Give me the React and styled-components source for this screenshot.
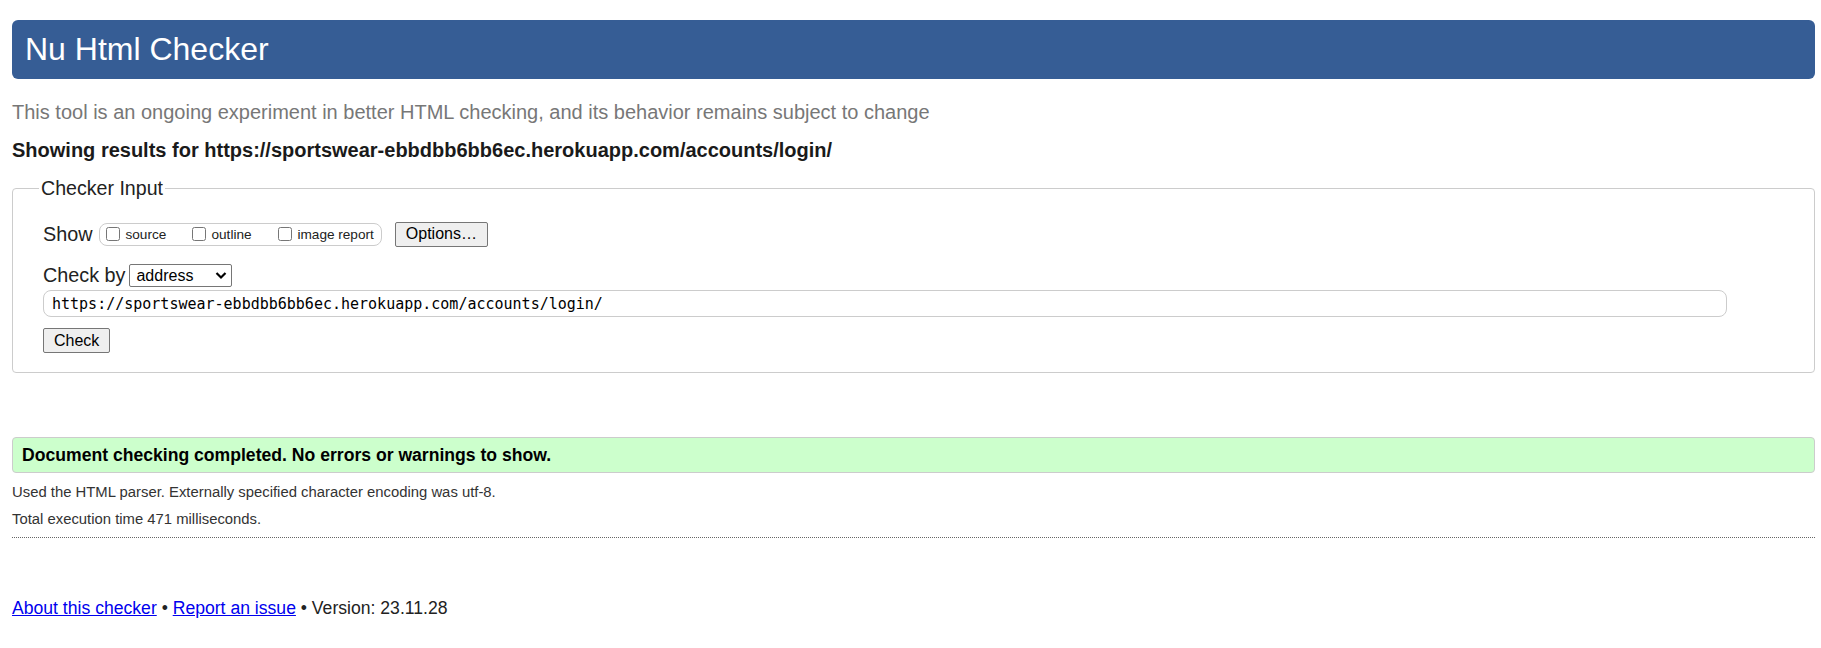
import React from 'react';
import styled, { createGlobalStyle } from 'styled-components';

const GlobalStyle = createGlobalStyle`
  html, body {
    margin: 0;
    padding: 0;
    background: #ffffff;
  }
  body {
    font-family: "Liberation Sans", Arial, sans-serif;
    font-size: 17.6px;
    color: #222222;
  }
`;

const Page = styled.div`
  padding: 0 6px 0 12px;
`;

const Header = styled.h1`
  margin: 20px 0 0 0;
  height: 59px;
  padding: 0 13px;
  display: flex;
  align-items: center;
  background: #365d95;
  color: #ffffff;
  font-size: 32px;
  font-weight: normal;
  border-radius: 6px;
`;

const Intro = styled.p`
  margin: 22px 0 0 0;
  font-size: 20px;
  line-height: 23px;
  color: #777777;
`;

const ResultsFor = styled.p`
  margin: 15px 0 0 0;
  font-size: 20px;
  line-height: 23px;
  font-weight: bold;
  color: #1a1a1a;
`;

const Fieldset = styled.fieldset`
  margin: 15px 0 0 0;
  padding: 23px 30px 19px 30px;
  border: 1px solid #cccccc;
  border-radius: 4px;
  min-width: 0;
`;

const Legend = styled.legend`
  padding: 0 2px;
  margin-left: -4px;
  font-size: 19.6px;
  line-height: 22px;
  color: #222222;
`;

const Row = styled.div`
  display: flex;
  align-items: center;
  height: ${p => p.$h}px;
  margin-top: ${p => p.$mt || 0}px;
`;

const RowLabel = styled.span`
  font-size: 19.8px;
  color: #222222;
  margin-right: ${p => p.$gap}px;
`;

const CheckGroup = styled.span`
  display: inline-flex;
  align-items: center;
  height: 21px;
  padding: 0 7px 0 4px;
  border: 1px solid #cccccc;
  border-radius: 8px;
`;

const CheckItem = styled.label`
  display: inline-flex;
  align-items: center;
  min-width: ${p => p.$w}px;
  font-size: 13.6px;
  color: #222222;

  input {
    margin: 0 5px 0 2px;
    width: 14px;
    height: 14px;
  }
`;

const Button = styled.button`
  height: ${p => p.$h}px;
  padding: 0 ${p => p.$px}px;
  margin-left: ${p => p.$ml || 0}px;
  font-family: "Liberation Sans", Arial, sans-serif;
  font-size: 16px;
  color: #000000;
  background: #efefef;
  border: 1px solid #767676;
  border-radius: 2px;
`;

const SelectBox = styled.span`
  position: relative;
  display: inline-flex;
  align-items: center;
  width: 103px;
  height: 23px;
  box-sizing: border-box;
  border: 1px solid #767676;
  border-radius: 2px;
  padding-left: 6px;
  font-size: 16px;
  color: #000000;
  background: #ffffff;

  svg {
    position: absolute;
    right: 4px;
    top: 6px;
  }
`;

const UrlInput = styled.input`
  display: block;
  box-sizing: border-box;
  width: 1684px;
  height: 27px;
  margin-top: 3px;
  padding: 0 8px;
  border: 1px solid #cccccc;
  border-radius: 8px;
  font-family: "DejaVu Sans Mono", "Liberation Mono", monospace;
  font-size: 15px;
  color: #000000;
  outline: none;
`;

const SubmitRow = styled.div`
  margin-top: 11px;
`;

const Success = styled.div`
  margin-top: 64px;
  height: 34px;
  padding: 0 9px;
  display: flex;
  align-items: center;
  border: 1px solid #cccccc;
  border-radius: 4px;
  background: #ccffcc;
  font-weight: bold;
  color: #000000;
`;

const Detail = styled.p`
  margin: ${p => p.$mt}px 0 0 0;
  line-height: 18px;
  font-size: 14.85px;
  color: #333333;
`;

const Divider = styled.hr`
  margin: 9px 0 0 0;
  border: 0;
  border-top: 1px dotted #666666;
  height: 0;
`;

const Footer = styled.p`
  margin: 59px 0 0 0;
  line-height: 22px;
  color: #222222;

  a {
    color: #0000ee;
    text-decoration: underline;
  }
`;

const url = 'https://sportswear-ebbdbb6bb6ec.herokuapp.com/accounts/login/';

export default function App() {
  return (
    <Page>
      <GlobalStyle />
      <Header>Nu Html Checker</Header>
      <Intro>This tool is an ongoing experiment in better HTML checking, and its behavior remains subject to change</Intro>
      <ResultsFor>Showing results for {url}</ResultsFor>

      <Fieldset>
        <Legend>Checker Input</Legend>
        <Row $h={24}>
          <RowLabel $gap={7}>Show</RowLabel>
          <CheckGroup>
            <CheckItem $w={86}><input type="checkbox" />source</CheckItem>
            <CheckItem $w={86}><input type="checkbox" />outline</CheckItem>
            <CheckItem $w={0}><input type="checkbox" />image report</CheckItem>
          </CheckGroup>
          <Button $h={25} $px={10} $ml={13}>Options…</Button>
        </Row>
        <Row $h={23} $mt={18}>
          <RowLabel $gap={4}>Check by</RowLabel>
          <SelectBox>
            address
            <svg width="12" height="9" viewBox="0 0 12 9">
              <path d="M1.5 2 L6 6.5 L10.5 2" fill="none" stroke="#000" strokeWidth="2.2" />
            </svg>
          </SelectBox>
        </Row>
        <UrlInput defaultValue={url} />
        <SubmitRow>
          <Button $h={25} $px={10}>Check</Button>
        </SubmitRow>
      </Fieldset>

      <Success>Document checking completed. No errors or warnings to show.</Success>
      <Detail $mt={10}>Used the HTML parser. Externally specified character encoding was utf-8.</Detail>
      <Detail $mt={9}>Total execution time 471 milliseconds.</Detail>
      <Divider />
      <Footer>
        <a href="#about">About this checker</a> • <a href="#issue">Report an issue</a> • Version: 23.11.28
      </Footer>
    </Page>
  );
}
